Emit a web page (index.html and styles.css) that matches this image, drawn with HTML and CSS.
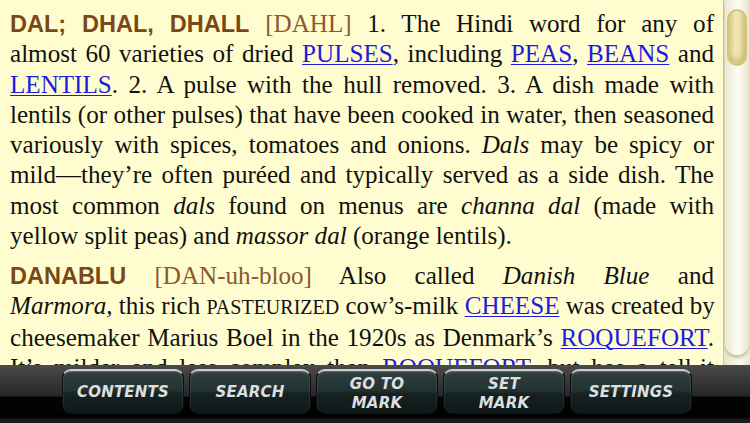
FILE: index.html
```html
<!DOCTYPE html>
<html>
<head>
<meta charset="utf-8">
<link rel="stylesheet" href="styles.css">
</head>
<body>
<div class="app">
  <div class="main">
    <div class="content">
      <div class="entry">
        <span class="ln"><span class="hw">DAL; DHAL, DHALL</span> <span class="pr">[DAHL]</span> 1. The Hindi word for any of</span>
        <span class="ln">almost 60 varieties of dried <a href="#">PULSES</a>, including <a href="#">PEAS</a>, <a href="#">BEANS</a> and</span>
        <span class="ln"><a href="#">LENTILS</a>. 2. A pulse with the hull removed. 3. A dish made with</span>
        <span class="ln">lentils (or other pulses) that have been cooked in water, then seasoned</span>
        <span class="ln">variously with spices, tomatoes and onions. <i>Dals</i> may be spicy or</span>
        <span class="ln">mild—they’re often puréed and typically served as a side dish. The</span>
        <span class="ln">most common <i>dals</i> found on menus are <i>channa dal</i> (made with</span>
        <span class="ln last">yellow split peas) and <i>massor dal</i> (orange lentils).</span>
      </div>
      <div class="entry">
        <span class="ln"><span class="hw">DANABLU</span> <span class="pr">[DAN-uh-bloo]</span> Also called <i>Danish Blue</i> and</span>
        <span class="ln"><i>Marmora,</i> this rich <span class="sc">PASTEURIZED</span> cow’s-milk <a href="#">CHEESE</a> was created by</span>
        <span class="ln">cheesemaker Marius Boel in the 1920s as Denmark’s <a href="#">ROQUEFORT</a>.</span>
        <span class="ln">It’s milder and less complex than <a href="#">ROQUEFORT</a>, but has a tell-it</span>
      </div>
    </div>
    <div class="scrollbar">
      <div class="track">
        <div class="thumb"></div>
      </div>
    </div>
  </div>
  <div class="toolbar">
    <div class="btn">CONTENTS</div>
    <div class="btn">SEARCH</div>
    <div class="btn two">GO TO<br>MARK</div>
    <div class="btn two">SET<br>MARK</div>
    <div class="btn">SETTINGS</div>
  </div>
</div>
</body>
</html>
```
FILE: styles.css
```css
html, body {
  margin: 0;
  padding: 0;
}
body {
  width: 750px;
  height: 423px;
  overflow: hidden;
  background: #000;
}
.app {
  width: 750px;
  height: 423px;
  display: flex;
  flex-direction: column;
}
.main {
  flex: 1;
  display: flex;
  min-height: 0;
  background: #fffdd0;
}
.content {
  flex: 1;
  padding: 9px 9px 0 10px;
  overflow: hidden;
  font-family: "Liberation Serif", "Times New Roman", serif;
  font-size: 25.1px;
  line-height: 30.3px;
  color: #111;
}
.entry {
  margin-bottom: 9.7px;
}
.ln {
  display: block;
  white-space: nowrap;
  text-align: justify;
  text-align-last: justify;
}
.ln.last {
  text-align-last: left;
}
.hw {
  font-family: "Liberation Sans", Arial, sans-serif;
  font-weight: bold;
  font-size: 23.5px;
  color: #7a4716;
}
.pr {
  color: #8a5a2c;
}
.sc {
  font-size: 20px;
}
a {
  color: #1c1ce0;
  text-decoration: underline;
  text-decoration-thickness: 1px;
  text-underline-offset: 2px;
}
.scrollbar {
  width: 27px;
  border-left: 1px solid #c9c5ad;
  background: linear-gradient(90deg, #e6e2cc 0%, #f3f0e0 30%, #fbf9ef 60%, #ebe7d2 100%);
  box-sizing: border-box;
  display: flex;
  flex-direction: column;
}
.track {
  height: 355px;
  margin: 0 1px;
  border-radius: 0 0 12px 12px;
  background: linear-gradient(90deg, #ebe7d0 0%, #f8f6ea 35%, #fffef6 55%, #e9e4cb 100%);
  box-shadow: 0 3px 3px rgba(150, 135, 80, 0.45);
  padding-top: 9px;
  box-sizing: border-box;
}
.thumb {
  width: 20px;
  height: 57px;
  margin: 0 auto;
  border-radius: 10px;
  box-sizing: border-box;
  border: 2px solid #d3c47c;
  background: linear-gradient(90deg, #ded293 0%, #efe8b8 40%, #e9e0a6 70%, #d6c983 100%);
  box-shadow: inset 0 -5px 5px rgba(190, 170, 80, 0.5);
}
.toolbar {
  height: 58px;
  flex: none;
  display: flex;
  gap: 5px;
  padding: 4px 0 0 62px;
  box-sizing: border-box;
  background: linear-gradient(180deg, #4a4a4a 0px, #333 20px, #262626 31px, #050505 32px, #000 52px, #1b1b1b 55px, #1b1b1b 58px);
}
.btn {
  width: 122px;
  height: 45px;
  box-sizing: border-box;
  border-radius: 9px;
  border: 1px solid #0b0f0f;
  border-top: 2px solid #c9d0d0;
  background: linear-gradient(180deg, #2f3f3f 0%, #233232 45%, #162121 55%, #0f1818 100%);
  box-shadow: inset 0 1px 2px rgba(255, 255, 255, 0.25);
  display: flex;
  align-items: center;
  justify-content: center;
  text-align: center;
  font-family: "DejaVu Sans", Verdana, sans-serif;
  font-weight: bold;
  font-style: italic;
  font-size: 15px;
  line-height: 19px;
  letter-spacing: 0.2px;
  color: #dcdfdf;
}
.btn.two {
  align-items: flex-start;
  padding-top: 4px;
}
```
